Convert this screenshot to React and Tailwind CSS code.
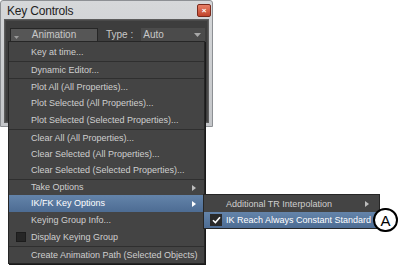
import React from 'react';

// Menu entries: label, height, separator above, flags
const items = [
  { label: 'Key at time...', h: 'h-[17px]' },
  { label: 'Dynamic Editor...', h: 'h-[17px]', sep: true },
  { label: 'Plot All (All Properties)...', h: 'h-[17px]', sep: true },
  { label: 'Plot Selected (All Properties)...', h: 'h-[17px]' },
  { label: 'Plot Selected (Selected Properties)...', h: 'h-[17px]' },
  { label: 'Clear All (All Properties)...', h: 'h-[17px]', sep: true },
  { label: 'Clear Selected (All Properties)...', h: 'h-[16px]' },
  { label: 'Clear Selected (Selected Properties)...', h: 'h-[17px]' },
  { label: 'Take Options', h: 'h-[16px]', sep: true, sub: true },
  { label: 'IK/FK Key Options', h: 'h-[17px]', sub: true, active: true },
  { label: 'Keying Group Info...', h: 'h-[17px]' },
  { label: 'Display Keying Group', h: 'h-[17px]', box: true },
  { label: 'Create Animation Path (Selected Objects)', h: 'h-[17px]', sep: true },
];

const Arrow = ({ className }) => (
  <svg width="4" height="6" viewBox="0 0 4 6" className={className}>
    <path d="M0 0 L4 3 L0 6 Z" fill="currentColor" />
  </svg>
);

const MenuRow = ({ item }) => (
  <div
    className={`${item.h} relative flex items-center pl-[22px] pr-[8px] ${
      item.sep ? 'border-t border-[#2f2f2f]' : ''
    } ${
      item.active
        ? 'bg-gradient-to-b from-[#6484aa] to-[#4d6c93] text-white'
        : 'text-[#cfcfcf]'
    }`}
  >
    {item.box && (
      <span className="absolute left-[7px] top-[3px] w-[10px] h-[10px] bg-[#262626] border border-[#1c1c1c]" />
    )}
    <span className="flex-1 whitespace-nowrap">{item.label}</span>
    {item.sub && <Arrow className={item.active ? 'text-white' : 'text-[#bdbdbd]'} />}
  </div>
);

export default function App() {
  return (
    <div className="relative w-[398px] h-[265px] overflow-hidden bg-white text-[9px] leading-none font-['Liberation_Sans',Arial,sans-serif]">
      {/* Dialog window */}
      <div className="w-[213px] h-[127px] bg-gradient-to-b from-[#d6d8da] to-[#c4c6c9] border border-[#8d9094] rounded-t-[3px] flex flex-col px-[4px] pb-[4px]">
        <div className="h-[19px] flex items-center justify-between pl-[2px] mr-[-3px]">
          <span className="text-[12px] text-[#1e1e1e] tracking-[-0.2px]">Key Controls</span>
          <div className="w-[14px] h-[13px] rounded-[2px] bg-gradient-to-b from-[#e88068] to-[#c0432a] border border-[#7a2a1c] flex items-center justify-center text-white text-[8px] font-bold">
            ×
          </div>
        </div>
        <div className="flex-1 bg-[#3d3d3d] border border-[#4a4a4a] outline outline-1 outline-[#5c5c5c] flex flex-col">
          <div className="h-[20px] flex items-center pl-[4px] gap-[8px] mt-[4px]">
            <div className="relative w-[88px] h-[14px] bg-[#565656] border border-[#262626] flex items-center justify-center text-[#c8c8c8] text-[10px]">
              <svg width="5" height="3" viewBox="0 0 5 3" className="absolute left-[3px] bottom-[2px]">
                <path d="M0 0 L5 0 L2.5 3 Z" fill="#9a9a9a" />
              </svg>
              Animation
            </div>
            <span className="text-[#c8c8c8] text-[10px]">Type :</span>
            <div className="w-[64px] h-[14px] bg-[#4b4b4b] flex items-center justify-between pl-[2px] pr-[4px] text-[#c8c8c8] text-[10px]">
              Auto
              <svg width="7" height="4" viewBox="0 0 7 4">
                <path d="M0 0 L7 0 L3.5 4 Z" fill="#a8a8a8" />
              </svg>
            </div>
          </div>
        </div>
      </div>

      {/* Dropdown menu */}
      <div className="absolute left-[8px] top-[41px] w-[197px] h-[223px] bg-[#444444] border border-[#262626] pt-[2px] shadow-[1px_1px_0_#1a1a1a]">
        {items.map((it) => (
          <MenuRow key={it.label} item={it} />
        ))}
      </div>

      {/* Submenu */}
      <div className="absolute left-[203px] top-[194px] w-[177px] h-[35px] bg-[#444444] border border-[#262626] py-[1px]">
        <div className="h-[16px] flex items-center pl-[22px] pr-[10px] text-[#cfcfcf]">
          <span className="flex-1 whitespace-nowrap">Additional TR Interpolation</span>
          <Arrow className="text-[#bdbdbd]" />
        </div>
        <div className="relative h-[16px] flex items-center pl-[22px] bg-gradient-to-b from-[#6484aa] to-[#4d6c93] text-white">
          <span className="absolute left-[6px] top-[2px] w-[12px] h-[12px] bg-[#2a2a2a] flex items-center justify-center">
            <svg width="9" height="8" viewBox="0 0 9 8">
              <path d="M1 4.2 L3.4 6.6 L8 1.2" stroke="white" strokeWidth="1.6" fill="none" />
            </svg>
          </span>
          <span className="whitespace-nowrap">IK Reach Always Constant Standard</span>
        </div>
      </div>

      {/* Callout */}
      <div className="absolute left-[373px] top-[208px] w-[25px] h-[24px] rounded-full bg-white border-2 border-black flex items-center justify-center text-[15px] text-black">
        A
      </div>
    </div>
  );
}
